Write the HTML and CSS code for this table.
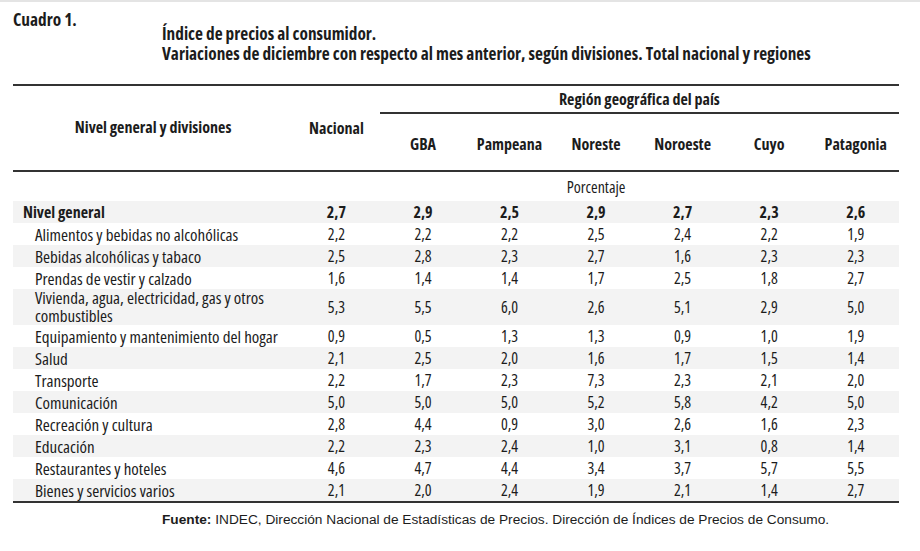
FILE: index.html
```html
<!DOCTYPE html>
<html lang="es">
<head>
<meta charset="utf-8">
<title>Cuadro 1</title>
<link rel="stylesheet" href="styles.css">
</head>
<body>
<div class="page">
  <div class="heading">
    <div class="label">Cuadro 1.</div>
    <div class="title">
      <div>Índice de precios al consumidor.</div>
      <div>Variaciones de diciembre con respecto al mes anterior, según divisiones. Total nacional y regiones</div>
    </div>
  </div>
  <table class="data">
    <colgroup>
      <col class="c-label"><col class="c-num"><col class="c-num"><col class="c-num"><col class="c-num"><col class="c-num"><col class="c-num"><col class="c-num">
    </colgroup>
    <thead>
      <tr class="h1">
        <th rowspan="2" class="h-label">Nivel general y divisiones</th>
        <th rowspan="2" class="h-nac">Nacional</th>
        <th colspan="6" class="h-region">Región geográfica del país</th>
      </tr>
      <tr class="h2">
        <th>GBA</th><th>Pampeana</th><th>Noreste</th><th>Noroeste</th><th>Cuyo</th><th>Patagonia</th>
      </tr>
    </thead>
    <tbody>
      <tr class="unit"><td></td><td></td><td></td><td></td><td class="pct">Porcentaje</td><td></td><td></td><td></td></tr>
      <tr class="total alt"><td class="lbl">Nivel general</td><td>2,7</td><td>2,9</td><td>2,5</td><td>2,9</td><td>2,7</td><td>2,3</td><td>2,6</td></tr>
      <tr><td class="lbl sub">Alimentos y bebidas no alcohólicas</td><td>2,2</td><td>2,2</td><td>2,2</td><td>2,5</td><td>2,4</td><td>2,2</td><td>1,9</td></tr>
      <tr class="alt"><td class="lbl sub">Bebidas alcohólicas y tabaco</td><td>2,5</td><td>2,8</td><td>2,3</td><td>2,7</td><td>1,6</td><td>2,3</td><td>2,3</td></tr>
      <tr><td class="lbl sub">Prendas de vestir y calzado</td><td>1,6</td><td>1,4</td><td>1,4</td><td>1,7</td><td>2,5</td><td>1,8</td><td>2,7</td></tr>
      <tr class="alt tall"><td class="lbl sub">Vivienda, agua, electricidad, gas y otros<br>combustibles</td><td>5,3</td><td>5,5</td><td>6,0</td><td>2,6</td><td>5,1</td><td>2,9</td><td>5,0</td></tr>
      <tr><td class="lbl sub">Equipamiento y mantenimiento del hogar</td><td>0,9</td><td>0,5</td><td>1,3</td><td>1,3</td><td>0,9</td><td>1,0</td><td>1,9</td></tr>
      <tr class="alt"><td class="lbl sub">Salud</td><td>2,1</td><td>2,5</td><td>2,0</td><td>1,6</td><td>1,7</td><td>1,5</td><td>1,4</td></tr>
      <tr><td class="lbl sub">Transporte</td><td>2,2</td><td>1,7</td><td>2,3</td><td>7,3</td><td>2,3</td><td>2,1</td><td>2,0</td></tr>
      <tr class="alt"><td class="lbl sub">Comunicación</td><td>5,0</td><td>5,0</td><td>5,0</td><td>5,2</td><td>5,8</td><td>4,2</td><td>5,0</td></tr>
      <tr><td class="lbl sub">Recreación y cultura</td><td>2,8</td><td>4,4</td><td>0,9</td><td>3,0</td><td>2,6</td><td>1,6</td><td>2,3</td></tr>
      <tr class="alt"><td class="lbl sub">Educación</td><td>2,2</td><td>2,3</td><td>2,4</td><td>1,0</td><td>3,1</td><td>0,8</td><td>1,4</td></tr>
      <tr><td class="lbl sub">Restaurantes y hoteles</td><td>4,6</td><td>4,7</td><td>4,4</td><td>3,4</td><td>3,7</td><td>5,7</td><td>5,5</td></tr>
      <tr class="alt last"><td class="lbl sub">Bienes y servicios varios</td><td>2,1</td><td>2,0</td><td>2,4</td><td>1,9</td><td>2,1</td><td>1,4</td><td>2,7</td></tr>
    </tbody>
  </table>
  <p class="source"><b>Fuente:</b> INDEC, Dirección Nacional de Estadísticas de Precios. Dirección de Índices de Precios de Consumo.</p>
</div>
</body>
</html>
```
FILE: styles.css
```css
html, body {
  margin: 0;
  padding: 0;
  background: #ffffff;
}
body {
  border-top: 2px solid #e4e4e4;
  font-family: "Open Sans", "Liberation Sans", sans-serif;
  font-stretch: 75%;
  color: #1c1c1c;
}
.page {
  padding: 0 21px 0 13px;
}
.heading {
  display: flex;
  padding-top: 8px;
  font-weight: bold;
  font-size: 17.3px;
  line-height: 20px;
}
.label {
  width: 149px;
  flex: none;
}
.title {
  padding-top: 14px;
}
.data {
  margin-top: 20px;
  width: 886px;
  border-collapse: collapse;
  table-layout: fixed;
  font-size: 16px;
}
.c-label { width: 280px; }
.c-num { width: 86.5px; }
.data thead th {
  font-weight: bold;
  padding: 0;
  line-height: 18px;
}
.h1 th {
  border-top: 2px solid #333;
}
.h-label, .h-nac {
  border-bottom: 2px solid #333;
  vertical-align: middle;
}
.h-label {
  padding-bottom: 2px !important;
}
.h-region {
  height: 26px;
  border-bottom: 2px solid #333;
}
.h2 th {
  height: 52px;
  padding-top: 4px !important;
  border-bottom: 2px solid #333;
}
.data td {
  padding: 0;
  height: 22px;
  text-align: center;
  line-height: 17px;
}
.unit td {
  height: 28px;
  padding-top: 1px;
  vertical-align: middle;
}
.alt td {
  background: #f3f3f3;
}
.total td {
  font-weight: bold;
}
.lbl {
  text-align: left !important;
  padding-left: 10px !important;
}
.lbl.sub {
  padding-left: 22px !important;
  font-size: 17px;
}
.tall td {
  height: 36px;
}
.tall .lbl {
  line-height: 18px;
}
.last td {
  border-bottom: 2px solid #333;
}
.source {
  margin: 9px 0 0 149px;
  font-family: "Liberation Sans", Arial, sans-serif;
  font-stretch: normal;
  font-size: 13.7px;
  line-height: 16px;
}
```
